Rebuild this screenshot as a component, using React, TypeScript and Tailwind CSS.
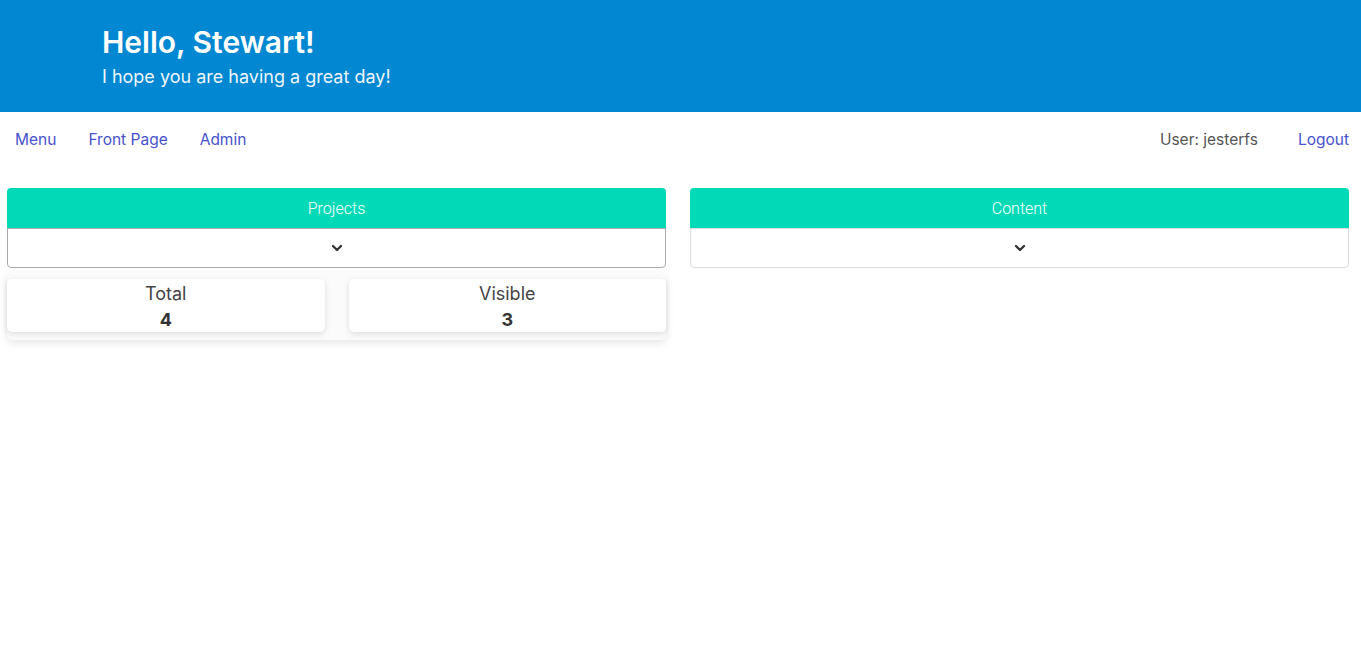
import { ChevronDown } from 'lucide-react';

function Panel({ title, focused, children }: { title: string; focused?: boolean; children?: React.ReactNode }) {
  return (
    <div className="flex flex-col">
      <div className="flex h-10 items-center justify-center rounded-t-[4px] bg-[#02d9b7] pt-[1px] font-['Roboto'] text-[16px] font-light text-white">
        {title}
      </div>
      <div
        className={`flex h-10 items-center justify-center rounded-b-[4px] border bg-white ${
          focused ? 'border-[#a9a9a9]' : 'border-[#dcdcdc]'
        }`}
      >
        <ChevronDown className="h-4 w-4 text-[#333]" strokeWidth={3.5} />
      </div>
      {children}
    </div>
  );
}

function Stat({ label, value }: { label: string; value: number }) {
  return (
    <div className="flex h-[53px] flex-col items-center justify-center rounded-[5px] bg-white pt-[2px] shadow-[0_2px_6px_rgba(0,0,0,0.12)]">
      <span className="text-[18px] leading-6 text-[#444]">{label}</span>
      <span className="mt-[2px] text-[18px] font-bold leading-6 text-[#333]">{value}</span>
    </div>
  );
}

export default function App() {
  return (
    <div className="min-h-[653px] bg-white font-['Inter',sans-serif]">
      <header className="h-[112px] bg-[#0288d2] pl-[102px] pt-[24px] text-white">
        <h1 className="text-[30px] font-semibold leading-9">Hello, Stewart!</h1>
        <p className="mt-[5px] text-[18px] leading-6 text-white/95">I hope you are having a great day!</p>
      </header>

      <nav className="flex h-[53px] items-center justify-between pl-[15px] pr-[12px] pt-[2px] text-[15.5px]">
        <div className="flex items-center gap-8">
          <a className="text-[#4752cc]">Menu</a>
          <a className="text-[#4752cc]">Front Page</a>
          <a className="text-[#4752cc]">Admin</a>
        </div>
        <div className="flex items-center gap-10">
          <span className="text-[#555]">User: jesterfs</span>
          <a className="text-[#4752cc]">Logout</a>
        </div>
      </nav>

      <main className="grid grid-cols-2 gap-6 pl-[7px] pr-[12px] pt-[23px]">
        <Panel title="Projects" focused>
          <div className="mt-1 grid grid-cols-2 gap-6 rounded-[5px] bg-[#fbfbfb] pb-2 pt-[7px] shadow-[0_3px_8px_rgba(0,0,0,0.1)]">
            <Stat label="Total" value={4} />
            <Stat label="Visible" value={3} />
          </div>
        </Panel>
        <Panel title="Content" />
      </main>
    </div>
  );
}
